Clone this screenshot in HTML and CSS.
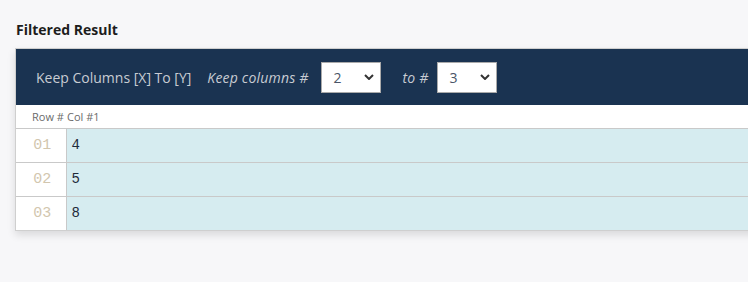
FILE: index.html
```html
<html>
	<head>
<link rel="stylesheet" href="styles.css">
	</head>
	<body>
		<h3 class="title">Filtered Result</h3>

		<div class="panel">
			<div class="toolbar">
				<span class="op">Keep Columns [X] To [Y]</span>
				<label class="arg">Keep columns #</label>
				<div class="pick"><span>2</span><svg viewBox="0 0 10 6" width="10" height="6"><path d="M1 1 L5 5 L9 1" fill="none" stroke="#333" stroke-width="2"/></svg></div>
				<label class="arg to">to #</label>
				<div class="pick"><span>3</span><svg viewBox="0 0 10 6" width="10" height="6"><path d="M1 1 L5 5 L9 1" fill="none" stroke="#333" stroke-width="2"/></svg></div>
			</div>

			<table class="grid">
				<tr><th class="rn">Row #</th><th>Col #1</th></tr>
				<tr><td class="rn">01</td><td class="val">4</td></tr>
				<tr><td class="rn">02</td><td class="val">5</td></tr>
				<tr><td class="rn">03</td><td class="val">8</td></tr>
			</table>
		</div>
	</body>
</html>
```

FILE: styles.css
```css
html, body {
    overflow: hidden;
}

body {
    margin: 0;
    padding: 20px 0 0 15px;
    background: #f7f7f9;
    font-family: "Open Sans", "Noto Sans", sans-serif;
    color: #222;
}

.title {
    margin: 0 0 8px 1px;
    font-size: 14px;
    font-weight: bold;
    color: #1d1d1d;
    line-height: 20px;
}

.panel {
    width: 760px;
    border: 1px solid #cfcfcf;
    background: #fff;
    box-shadow: 0 4px 8px rgba(0, 0, 0, 0.12);
}

.toolbar {
    display: flex;
    align-items: center;
    height: 56px;
    padding: 0 0 0 20px;
    background: #1a3351;
    color: #c8ccd3;
    font-size: 14px;
}

.op {
    margin-right: 16px;
}

.arg {
    font-style: italic;
    margin-right: 13px;
    letter-spacing: 0.2px;
}

.arg.to {
    margin-left: 21px;
    margin-right: 9px;
}

.pick {
    display: flex;
    align-items: center;
    justify-content: space-between;
    box-sizing: border-box;
    width: 60px;
    height: 31px;
    padding: 0 6px 0 11px;
    background: #fff;
    border: 1px solid #aaa;
    color: #4a5568;
    font-size: 14px;
}

.grid {
    width: 100%;
    border-collapse: collapse;
}

.grid th {
    height: 23px;
    padding: 0 0 0 1px;
    text-align: left;
    font-weight: normal;
    font-size: 11px;
    color: #6b6b6b;
    border-bottom: 1px solid #c9c9c9;
}

.grid th.rn {
    width: 34px;
    padding-left: 16px;
}

.grid td {
    height: 34px;
    padding: 0;
    border-bottom: 1px solid #c9c9c9;
    font-family: "Liberation Mono", "DejaVu Sans Mono", monospace;
    font-size: 14px;
}

.grid td.rn {
    width: 49px;
    text-align: center;
    color: #d2c6ae;
    border-right: 1px solid #c9c9c9;
    font-size: 15px;
    padding: 0 0 0 3px;
    box-sizing: border-box;
}

.grid td.val {
    background: #d6ecf0;
    color: #1e2a3a;
    padding-left: 5px;
}

.grid tr:last-child td {
    border-bottom: none;
}
```
